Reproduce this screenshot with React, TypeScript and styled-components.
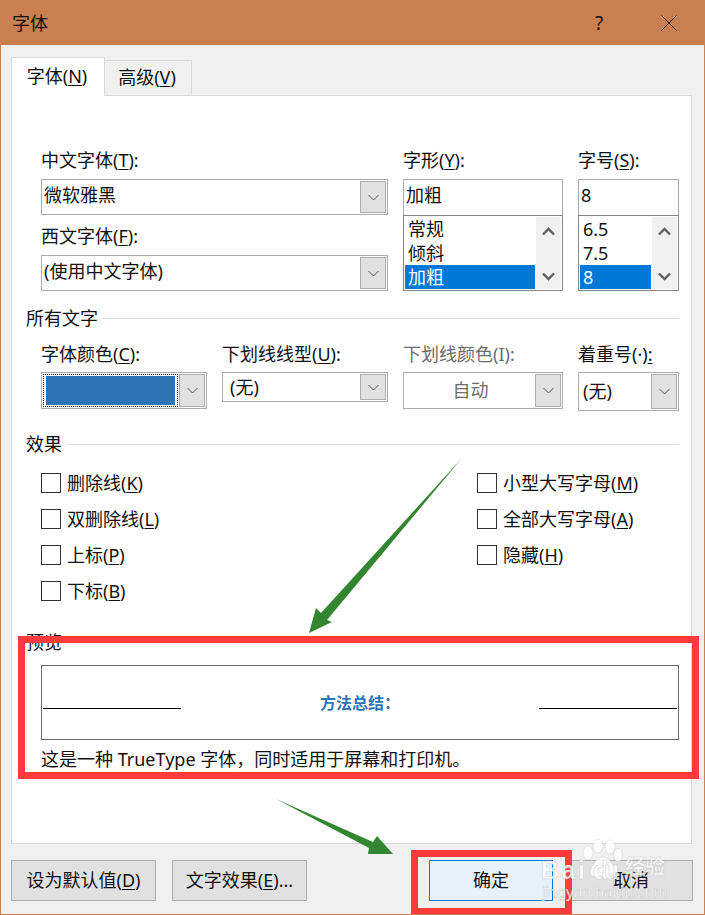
import React from 'react'
import styled, { createGlobalStyle } from 'styled-components'

const GlobalStyle = createGlobalStyle`
  html, body {
    margin: 0;
    padding: 0;
    background: #f0f0f0;
  }
  * {
    box-sizing: border-box;
  }
`

const Window = styled.div`
  position: relative;
  width: 705px;
  height: 915px;
  overflow: hidden;
  display: flex;
  flex-flow: column nowrap;
  background: #f0f0f0;
  border: 1px solid #c97f4f;
  border-top: 0;
  font-family: "Noto Sans", "Noto Sans CJK SC", sans-serif;
  font-size: 18px;
  line-height: 24px;
  color: #111;
`

const TitleBar = styled.div`
  height: 45px;
  flex: none;
  display: flex;
  align-items: center;
  padding-left: 11px;
  background: #c97f4f;
`

const TitleText = styled.div`
  flex: 1;
`

const TitleButton = styled.div`
  width: 70px;
  height: 45px;
  display: flex;
  align-items: center;
  justify-content: center;
  font-size: 19px;
`

const Body = styled.div`
  flex: 1;
  min-height: 0;
  display: flex;
  flex-flow: column nowrap;
  padding: 12px 11px 13px 10px;
`

const Tabs = styled.div`
  display: flex;
  align-items: flex-end;
  height: 38px;
  flex: none;
`

const Tab = styled.div<{ $active?: boolean }>`
  height: ${p => (p.$active ? '39px' : '35px')};
  margin-bottom: ${p => (p.$active ? '-1px' : '0')};
  width: ${p => (p.$active ? '94px' : '87px')};
  position: relative;
  z-index: ${p => (p.$active ? 1 : 0)};
  display: flex;
  align-items: center;
  justify-content: center;
  padding: 0 2px ${p => (p.$active ? '3px' : '2px')} 0;
  background: ${p => (p.$active ? '#fff' : '#f0f0f0')};
  border: 1px solid #d9d9d9;
  border-bottom: 0;
  border-left: ${p => (p.$active ? '1px solid #d9d9d9' : '0')};
`

const Panel = styled.div`
  flex: 1;
  min-height: 0;
  margin-right: 1px;
  padding: 53px 12px 0 14px;
  background: #fff;
  border: 1px solid #d9d9d9;
`

const Mnemonic = styled.span`
  text-decoration: underline;
  text-underline-offset: 2px;
  text-decoration-thickness: 1px;
`

const FontGrid = styled.div`
  display: grid;
  grid-template-columns: 347px 160px 101px;
  column-gap: 15px;
  margin: 0 0 0 15px;
`

const Column = styled.div`
  display: flex;
  flex-flow: column nowrap;
`

const Label = styled.div<{ $disabled?: boolean; $gap?: number; $top?: number }>`
  height: 24px;
  line-height: 22px;
  margin-top: ${p => p.$top ?? 0}px;
  margin-bottom: ${p => p.$gap ?? 6}px;
  white-space: nowrap;
  color: ${p => (p.$disabled ? '#6d6d6d' : 'inherit')};
`

const Combo = styled.div<{ $height?: number; $muted?: boolean }>`
  height: ${p => p.$height ?? 36}px;
  display: flex;
  align-items: stretch;
  padding: 1px;
  background: #fff;
  border: 1px solid #adadad;
  color: ${p => (p.$muted ? '#6d6d6d' : 'inherit')};
`

const ComboText = styled.div<{ $centered?: boolean; $pad?: number; $lift?: number }>`
  flex: 1;
  min-width: 0;
  display: flex;
  align-items: center;
  padding-left: ${p => p.$pad ?? 1}px;
  padding-bottom: ${p => p.$lift ?? 1}px;
  justify-content: ${p => (p.$centered ? 'center' : 'flex-start')};
  white-space: nowrap;
`

const ComboButton = styled.div`
  width: 26px;
  flex: none;
  display: flex;
  align-items: center;
  justify-content: center;
  background: #e1e1e1;
  border: 1px solid #adadad;
`

const ColorWell = styled.div`
  flex: 1;
  margin-right: 1px;
  padding: 1px;
  border: 1px dotted #111;
`

const ColorFill = styled.div`
  height: 100%;
  margin: 0 1px;
  background: #2e74b5;
`

const TextInput = styled.div`
  height: 36px;
  display: flex;
  align-items: center;
  padding: 0 0 6px 2px;
  background: #fff;
  border: 1px solid #a9abb2;
  border-bottom: 0;
`

const ListBox = styled.div`
  height: 76px;
  display: flex;
  padding: 1px;
  background: #fff;
  border: 1px solid #82858c;
`

const ListItems = styled.div`
  flex: 1;
  min-width: 0;
`

const ListItem = styled.div<{ $selected?: boolean }>`
  height: 24px;
  display: flex;
  align-items: center;
  padding-left: 3px;
  background: ${p => (p.$selected ? '#0078d7' : 'transparent')};
  color: ${p => (p.$selected ? '#fff' : 'inherit')};
`

const ScrollTrack = styled.div`
  width: 25px;
  flex: none;
  margin-left: 1px;
  display: flex;
  flex-flow: column nowrap;
  justify-content: space-between;
  align-items: center;
  padding: 10px 0 8px;
  background: #f0f0f0;
`

const SectionHeading = styled.div<{ $top: number }>`
  display: flex;
  align-items: center;
  gap: 5px;
  height: 24px;
  margin-top: ${p => p.$top}px;
  &::after {
    content: '';
    flex: 1;
    height: 1px;
    background: #dcdcdc;
  }
`

const AttributeGrid = styled.div`
  display: grid;
  grid-template-columns: 166px 166px 160px 101px;
  column-gap: 15px;
  align-items: start;
  margin: 13px 0 0 15px;
`

const EffectsGrid = styled.div`
  display: grid;
  grid-template-columns: 436px 1fr;
  grid-auto-rows: 36px;
  margin: 17px 0 -16px 15px;
`

const CheckRow = styled.div`
  display: flex;
  align-items: flex-start;
  gap: 6px;
  line-height: 20px;
`

const CheckBox = styled.div`
  width: 20px;
  height: 20px;
  flex: none;
  background: #fff;
  border: 1px solid #333;
`

const PreviewBox = styled.div`
  height: 75px;
  margin: 11px 0 0 15px;
  display: flex;
  justify-content: space-between;
  padding: 0 1px;
  border: 1px solid #6a6a6a;
`

const PreviewRule = styled.div`
  width: 138px;
  height: 1px;
  margin-top: 42px;
  background: #000;
`

const PreviewText = styled.div`
  align-self: center;
  font-size: 16px;
  font-weight: 700;
  color: #2e74b5;
`

const Caption = styled.div`
  margin: 7px 0 0 15px;
  white-space: nowrap;
`

const Footer = styled.div`
  flex: none;
  height: 41px;
  margin-top: 16px;
  display: flex;
  gap: 16px;
`

const Button = styled.div<{ $width: number; $primary?: boolean; $push?: boolean }>`
  width: ${p => p.$width}px;
  margin-left: ${p => (p.$push ? 'auto' : '0')};
  display: flex;
  align-items: center;
  justify-content: center;
  padding-bottom: 2px;
  white-space: nowrap;
  background: ${p => (p.$primary ? '#e5f1fb' : '#e1e1e1')};
  border: 1px solid ${p => (p.$primary ? '#0078d7' : '#adadad')};
`

const RedFrame = styled.div<{ $left: number; $top: number; $width: number; $height: number }>`
  position: absolute;
  left: ${p => p.$left}px;
  top: ${p => p.$top}px;
  width: ${p => p.$width}px;
  height: ${p => p.$height}px;
  border: 7px solid #ff3a3a;
  pointer-events: none;
`

const Overlay = styled.svg`
  position: absolute;
  left: -1px;
  top: 0;
  width: 705px;
  height: 915px;
  pointer-events: none;
`

const Chevron = () => (
  <svg width="11" height="7" viewBox="0 0 11 7">
    <path d="M.5 1 5.5 6 10.5 1" fill="none" stroke="#555" strokeWidth="1" />
  </svg>
)

const ScrollArrow = ({ up }: { up?: boolean }) => (
  <svg width="13" height="9" viewBox="0 0 13 9">
    <path d={up ? 'M1 7.5 6.5 2 12 7.5' : 'M1 1.5 6.5 7 12 1.5'} fill="none" stroke="#606060" strokeWidth="2.4" />
  </svg>
)

const Scroll = () => (
  <ScrollTrack>
    <ScrollArrow up />
    <ScrollArrow />
  </ScrollTrack>
)

const Check = ({ text, mn }: { text: string; mn: string }) => (
  <CheckRow>
    <CheckBox />
    <span>{text}(<Mnemonic>{mn}</Mnemonic>)</span>
  </CheckRow>
)

const Annotations = () => (
  <Overlay viewBox="0 0 705 915">
    <path d="M462 458 327 620 332 622 309 633 316 608 321 613Z" fill="#33862f" />
    <path d="M276 799 373 842 377 836 393 854 368 854 369 848Z" fill="#33862f" />
    <g fill="#fff" fillOpacity=".82" stroke="#bbb" strokeOpacity=".6" strokeWidth=".6">
      <ellipse cx="588" cy="853" rx="5" ry="7" />
      <ellipse cx="598" cy="846" rx="5" ry="7" />
      <ellipse cx="610" cy="847" rx="5" ry="7" />
      <ellipse cx="618" cy="855" rx="4.5" ry="6.5" />
      <path d="M603 857c6 0 10 8 12 12 2 5-2 8-6 8-3 0-4-1-6-1s-4 1-7 1c-5 0-8-4-5-9 3-4 6-11 12-11Z" />
      <text x="541" y="879" fontFamily="Liberation Sans" fontWeight="700" fontSize="25" textLength="44">Bai</text>
      <text x="593" y="879" fontFamily="Liberation Sans" fontWeight="700" fontSize="25" textLength="26">du</text>
      <text x="625" y="874" fontFamily="Noto Sans CJK SC" fontWeight="700" fontSize="20">经验</text>
      <text x="542" y="898" fontFamily="Liberation Sans" fontSize="16" textLength="125">jingyan.baidu.com</text>
    </g>
  </Overlay>
)

const App = () => (
  <Window>
    <GlobalStyle />
    <TitleBar>
      <TitleText>字体</TitleText>
      <TitleButton>?</TitleButton>
      <TitleButton>
        <svg width="16" height="16" viewBox="0 0 16 16">
          <path d="M.5.5 15.5 15.5M15.5.5.5 15.5" stroke="#222" strokeWidth="1" fill="none" />
        </svg>
      </TitleButton>
    </TitleBar>
    <Body>
      <Tabs>
        <Tab $active>字体(<Mnemonic>N</Mnemonic>)</Tab>
        <Tab>高级(<Mnemonic>V</Mnemonic>)</Tab>
      </Tabs>
      <Panel>
        <FontGrid>
          <Column>
            <Label>中文字体(<Mnemonic>T</Mnemonic>):</Label>
            <Combo>
              <ComboText $lift={5}>微软雅黑</ComboText>
              <ComboButton><Chevron /></ComboButton>
            </Combo>
            <Label $top={10}>西文字体(<Mnemonic>F</Mnemonic>):</Label>
            <Combo>
              <ComboText $lift={5}>(使用中文字体)</ComboText>
              <ComboButton><Chevron /></ComboButton>
            </Combo>
          </Column>
          <Column>
            <Label>字形(<Mnemonic>Y</Mnemonic>):</Label>
            <TextInput>加粗</TextInput>
            <ListBox>
              <ListItems>
                <ListItem>常规</ListItem>
                <ListItem>倾斜</ListItem>
                <ListItem $selected>加粗</ListItem>
              </ListItems>
              <Scroll />
            </ListBox>
          </Column>
          <Column>
            <Label>字号(<Mnemonic>S</Mnemonic>):</Label>
            <TextInput>8</TextInput>
            <ListBox>
              <ListItems>
                <ListItem>6.5</ListItem>
                <ListItem>7.5</ListItem>
                <ListItem $selected>8</ListItem>
              </ListItems>
              <Scroll />
            </ListBox>
          </Column>
        </FontGrid>

        <SectionHeading $top={15}><span>所有文字</span></SectionHeading>
        <AttributeGrid>
          <Column>
            <Label $gap={5}>字体颜色(<Mnemonic>C</Mnemonic>):</Label>
            <Combo $height={37}>
              <ColorWell><ColorFill /></ColorWell>
              <ComboButton><Chevron /></ComboButton>
            </Combo>
          </Column>
          <Column>
            <Label $gap={5}>下划线线型(<Mnemonic>U</Mnemonic>):</Label>
            <Combo $height={30}>
              <ComboText $pad={6}>(无)</ComboText>
              <ComboButton><Chevron /></ComboButton>
            </Combo>
          </Column>
          <Column>
            <Label $gap={5} $disabled>下划线颜色(I):</Label>
            <Combo $height={37} $muted>
              <ComboText $centered>自动</ComboText>
              <ComboButton><Chevron /></ComboButton>
            </Combo>
          </Column>
          <Column>
            <Label $gap={5}>着重号(·)<Mnemonic>:</Mnemonic></Label>
            <Combo $height={39}>
              <ComboText $pad={3}>(无)</ComboText>
              <ComboButton><Chevron /></ComboButton>
            </Combo>
          </Column>
        </AttributeGrid>

        <SectionHeading $top={21}><span>效果</span></SectionHeading>
        <EffectsGrid>
          <Check text="删除线" mn="K" />
          <Check text="小型大写字母" mn="M" />
          <Check text="双删除线" mn="L" />
          <Check text="全部大写字母" mn="A" />
          <Check text="上标" mn="P" />
          <Check text="隐藏" mn="H" />
          <Check text="下标" mn="B" />
        </EffectsGrid>

        <SectionHeading $top={29}><span>预览</span></SectionHeading>
        <PreviewBox>
          <PreviewRule />
          <PreviewText>方法总结：</PreviewText>
          <PreviewRule />
        </PreviewBox>
        <Caption>这是一种 TrueType 字体，同时适用于屏幕和打印机。</Caption>
      </Panel>
      <Footer>
        <Button $width={145}>设为默认值(<Mnemonic>D</Mnemonic>)</Button>
        <Button $width={135}>文字效果(<Mnemonic>E</Mnemonic>)...</Button>
        <Button $width={124} $primary $push>确定</Button>
        <Button $width={124}>取消</Button>
      </Footer>
    </Body>
    <RedFrame $left={17} $top={636} $width={681} $height={143} />
    <RedFrame $left={410} $top={850} $width={161} $height={65} />
    <Annotations />
  </Window>
)

export default App
